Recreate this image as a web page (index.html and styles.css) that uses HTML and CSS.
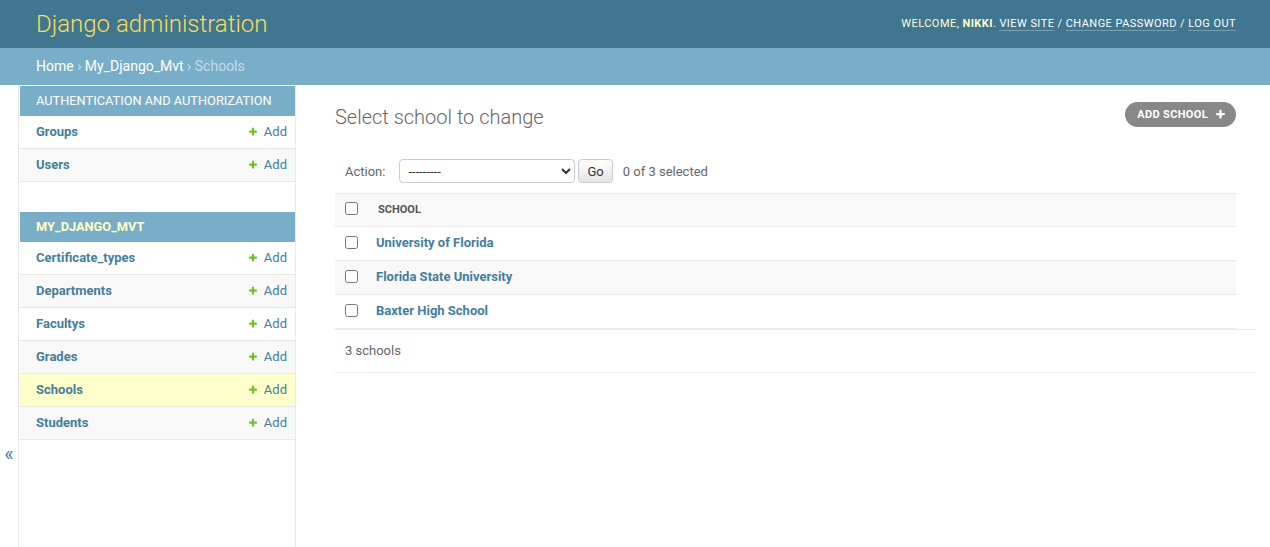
FILE: index.html
```html
<!DOCTYPE html>
<html lang="en">
<head>
<meta charset="utf-8">
<title>Select school to change | Django site admin</title>
<link rel="stylesheet" href="styles.css">
</head>
<body>
<div class="header">
  <h1 class="branding">Django administration</h1>
  <div class="user-tools">
    Welcome, <strong>nikki</strong>.
    <a href="#">View site</a> /
    <a href="#">Change password</a> /
    <a href="#">Log out</a>
  </div>
</div>
<div class="breadcrumbs">
  <a href="#">Home</a> &rsaquo; <a href="#">My_Django_Mvt</a> &rsaquo; Schools
</div>
<div class="main">
  <button class="toggle-nav" type="button" aria-label="Toggle navigation">&laquo;</button>
  <nav class="sidebar">
    <table class="module">
      <caption>Authentication and Authorization</caption>
      <tr class="row1"><th><a href="#">Groups</a></th><td><a class="addlink" href="#"><svg class="plus" viewBox="0 0 1792 1792"><path fill="#70bf2b" d="M1600 736v192q0 40-28 68t-68 28h-416v416q0 40-28 68t-68 28h-192q-40 0-68-28t-28-68v-416h-416q-40 0-68-28t-28-68v-192q0-40 28-68t68-28h416v-416q0-40 28-68t68-28h192q40 0 68 28t28 68v416h416q40 0 68 28t28 68z"/></svg>Add</a></td></tr>
      <tr class="row2"><th><a href="#">Users</a></th><td><a class="addlink" href="#"><svg class="plus" viewBox="0 0 1792 1792"><path fill="#70bf2b" d="M1600 736v192q0 40-28 68t-68 28h-416v416q0 40-28 68t-68 28h-192q-40 0-68-28t-28-68v-416h-416q-40 0-68-28t-28-68v-192q0-40 28-68t68-28h416v-416q0-40 28-68t68-28h192q40 0 68 28t28 68v416h416q40 0 68 28t28 68z"/></svg>Add</a></td></tr>
    </table>
    <table class="module">
      <caption class="current-app">My_Django_Mvt</caption>
      <tr class="row1"><th><a href="#">Certificate_types</a></th><td><a class="addlink" href="#"><svg class="plus" viewBox="0 0 1792 1792"><path fill="#70bf2b" d="M1600 736v192q0 40-28 68t-68 28h-416v416q0 40-28 68t-68 28h-192q-40 0-68-28t-28-68v-416h-416q-40 0-68-28t-28-68v-192q0-40 28-68t68-28h416v-416q0-40 28-68t68-28h192q40 0 68 28t28 68v416h416q40 0 68 28t28 68z"/></svg>Add</a></td></tr>
      <tr class="row2"><th><a href="#">Departments</a></th><td><a class="addlink" href="#"><svg class="plus" viewBox="0 0 1792 1792"><path fill="#70bf2b" d="M1600 736v192q0 40-28 68t-68 28h-416v416q0 40-28 68t-68 28h-192q-40 0-68-28t-28-68v-416h-416q-40 0-68-28t-28-68v-192q0-40 28-68t68-28h416v-416q0-40 28-68t68-28h192q40 0 68 28t28 68v416h416q40 0 68 28t28 68z"/></svg>Add</a></td></tr>
      <tr class="row1"><th><a href="#">Facultys</a></th><td><a class="addlink" href="#"><svg class="plus" viewBox="0 0 1792 1792"><path fill="#70bf2b" d="M1600 736v192q0 40-28 68t-68 28h-416v416q0 40-28 68t-68 28h-192q-40 0-68-28t-28-68v-416h-416q-40 0-68-28t-28-68v-192q0-40 28-68t68-28h416v-416q0-40 28-68t68-28h192q40 0 68 28t28 68v416h416q40 0 68 28t28 68z"/></svg>Add</a></td></tr>
      <tr class="row2"><th><a href="#">Grades</a></th><td><a class="addlink" href="#"><svg class="plus" viewBox="0 0 1792 1792"><path fill="#70bf2b" d="M1600 736v192q0 40-28 68t-68 28h-416v416q0 40-28 68t-68 28h-192q-40 0-68-28t-28-68v-416h-416q-40 0-68-28t-28-68v-192q0-40 28-68t68-28h416v-416q0-40 28-68t68-28h192q40 0 68 28t28 68v416h416q40 0 68 28t28 68z"/></svg>Add</a></td></tr>
      <tr class="current-model"><th><a href="#">Schools</a></th><td><a class="addlink" href="#"><svg class="plus" viewBox="0 0 1792 1792"><path fill="#70bf2b" d="M1600 736v192q0 40-28 68t-68 28h-416v416q0 40-28 68t-68 28h-192q-40 0-68-28t-28-68v-416h-416q-40 0-68-28t-28-68v-192q0-40 28-68t68-28h416v-416q0-40 28-68t68-28h192q40 0 68 28t28 68v416h416q40 0 68 28t28 68z"/></svg>Add</a></td></tr>
      <tr class="row2"><th><a href="#">Students</a></th><td><a class="addlink" href="#"><svg class="plus" viewBox="0 0 1792 1792"><path fill="#70bf2b" d="M1600 736v192q0 40-28 68t-68 28h-416v416q0 40-28 68t-68 28h-192q-40 0-68-28t-28-68v-416h-416q-40 0-68-28t-28-68v-192q0-40 28-68t68-28h416v-416q0-40 28-68t68-28h192q40 0 68 28t28 68v416h416q40 0 68 28t28 68z"/></svg>Add</a></td></tr>
    </table>
  </nav>
  <div class="content">
    <div class="content-head">
      <h1 class="title">Select school to change</h1>
      <a class="object-tool" href="#">Add school<svg class="tool-plus" viewBox="0 0 1792 1792"><path fill="#fff" d="M1600 736v192q0 40-28 68t-68 28h-416v416q0 40-28 68t-68 28h-192q-40 0-68-28t-28-68v-416h-416q-40 0-68-28t-28-68v-192q0-40 28-68t68-28h416v-416q0-40 28-68t68-28h192q40 0 68 28t28 68v416h416q40 0 68 28t28 68z"/></svg></a>
    </div>
    <div class="changelist">
      <div class="actions">
        <label class="action-label">Action:</label>
        <select class="action-select">
          <option>---------</option>
          <option>Delete selected schools</option>
        </select>
        <button class="go" type="button">Go</button>
        <span class="counter">0 of 3 selected</span>
      </div>
      <table class="result-list">
        <thead>
          <tr><th class="cb-col"><input type="checkbox"></th><th class="name-col"><span class="head-text">School</span></th></tr>
        </thead>
        <tbody>
          <tr class="row1"><td class="cb-col"><input type="checkbox"></td><th class="name-cell"><a href="#">University of Florida</a></th></tr>
          <tr class="row2"><td class="cb-col"><input type="checkbox"></td><th class="name-cell"><a href="#">Florida State University</a></th></tr>
          <tr class="row1"><td class="cb-col"><input type="checkbox"></td><th class="name-cell"><a href="#">Baxter High School</a></th></tr>
        </tbody>
      </table>
      <p class="paginator">3 schools</p>
    </div>
  </div>
</div>
</body>
</html>
```

FILE: styles.css
```css
html, body {
  margin: 0;
  padding: 0;
}
body {
  font-family: Roboto, "Liberation Sans", Arial, sans-serif;
  font-size: 14px;
  color: #333;
  background: #fff;
}
a {
  text-decoration: none;
  color: #447e9b;
}

/* header */
.header {
  display: flex;
  align-items: center;
  justify-content: space-between;
  height: 48px;
  padding: 0 34px 0 36px;
  background: #417690;
  box-sizing: border-box;
}
.branding {
  margin: 0 0 1px 0;
  font-size: 24px;
  font-weight: 300;
  color: #f5dd5d;
  line-height: 28px;
}
.user-tools {
  font-size: 11px;
  letter-spacing: 0.45px;
  text-transform: uppercase;
  font-weight: 400;
  color: #ffc;
  margin-bottom: 1px;
}
.user-tools strong {
  font-weight: 700;
}
.user-tools a {
  color: #fff;
  border-bottom: 1px solid rgba(255, 255, 255, 0.3);
}

/* breadcrumbs */
.breadcrumbs {
  background: #79aec8;
  padding: 10px 36px;
  line-height: 17px;
  font-size: 14px;
  color: #c4dce8;
}
.breadcrumbs a {
  color: #fff;
}

/* main */
.main {
  display: flex;
  min-height: calc(100vh - 85px);
}
.toggle-nav {
  flex: 0 0 19px;
  width: 19px;
  display: flex;
  justify-content: center;
  align-items: flex-start;
  padding: 357px 0 0 0;
  margin: 0;
  border: 0;
  border-right: 1px solid #eaeaea;
  background: #fff;
  font-family: Roboto, "Liberation Sans", sans-serif;
  font-size: 20px;
  line-height: 24px;
  color: #447e9b;
  cursor: pointer;
}
.sidebar {
  flex: 0 0 277px;
  width: 277px;
  box-sizing: border-box;
  padding-left: 1px;
  border-top: 1px solid transparent;
  border-right: 1px solid #eaeaea;
  overflow: hidden;
}
.module {
  width: 275px;
  table-layout: fixed;
  border-collapse: collapse;
  margin-bottom: 30px;
}
.module caption {
  background: #79aec8;
  color: #fff;
  text-align: left;
  text-transform: uppercase;
  white-space: nowrap;
  overflow: hidden;
  font-size: 12.8px;
  letter-spacing: 0;
  line-height: 14px;
  padding: 8px 16px;
  font-weight: 400;
}
.module caption.current-app {
  color: #ffc;
  font-weight: 700;
}
.module th, .module td {
  font-size: 13px;
  line-height: 16px;
  height: 16px;
  padding: 8px;
  border-bottom: 1px solid #e8e8e8;
  vertical-align: top;
}
.module th {
  text-align: left;
  padding-left: 16px;
  font-weight: 700;
}
.module td {
  width: 60px;
  text-align: right;
  white-space: nowrap;
}
.row1 { background: #fff; }
.row2 { background: #f8f8f8; }
.current-model { background: #ffc; }
.plus {
  display: inline-block;
  width: 10px;
  height: 10px;
  margin-right: 6px;
  vertical-align: -1px;
}

/* content */
.content {
  flex: 1 1 auto;
  min-width: 0;
  padding: 20px 34px 20px 39px;
}
.content-head {
  display: flex;
  justify-content: space-between;
  align-items: flex-start;
}
.title {
  margin: 0 0 20px 0;
  font-size: 20px;
  font-weight: 300;
  line-height: 24px;
  color: #666;
}
.object-tool {
  display: inline-flex;
  align-items: center;
  height: 25px;
  margin-top: -3px;
  padding: 0 10px 0 12px;
  border-radius: 15px;
  background: #888;
  color: #fff;
  font-size: 11px;
  font-weight: 700;
  letter-spacing: 0.35px;
  text-transform: uppercase;
}
.tool-plus {
  width: 11px;
  height: 11px;
  margin-left: 7px;
}

.actions {
  display: flex;
  align-items: center;
  padding: 10px;
  height: 24px;
  color: #666;
  font-size: 13px;
}
.action-label {
  margin-right: 14px;
}
.action-select {
  width: 176px;
  height: 24px;
  border: 1px solid #ccc;
  border-radius: 4px;
  font-family: Roboto, "Liberation Sans", sans-serif;
  font-size: 13px;
  color: #333;
  padding: 0 0 0 4px;
  margin: 0 3px 0 0;
  background: #fff;
}
.go {
  height: 24px;
  padding: 0 8px;
  border: 1px solid #ccc;
  border-radius: 4px;
  background: #fff;
  box-shadow: 0 -15px 20px -10px rgba(0, 0, 0, 0.15) inset;
  font-family: Roboto, "Liberation Sans", sans-serif;
  font-size: 13px;
  color: #333;
  margin: 0 10px 0 0;
}

.result-list {
  width: 100%;
  border-collapse: collapse;
}
.result-list thead th {
  background: #f8f8f8;
  border-top: 1px solid #eaeaea;
  border-bottom: 1px solid #eaeaea;
  height: 33px;
  padding: 8px 0 0 0;
  box-sizing: border-box;
  vertical-align: top;
  text-align: left;
}
.result-list thead th.cb-col,
.result-list tbody td.cb-col {
  width: 33px;
  padding: 8px 0 0 0;
}
.head-text {
  display: block;
  padding: 0 10px;
  line-height: 16px;
  font-size: 11px;
  font-weight: 700;
  color: #555;
  text-transform: uppercase;
}
.result-list input[type="checkbox"] {
  display: block;
  margin: 0 auto;
}
.result-list tbody input[type="checkbox"] {
  margin-top: 1px;
}
.result-list tbody td,
.result-list tbody th {
  height: 34px;
  padding: 8px;
  line-height: 16px;
  border-bottom: 1px solid #eaeaea;
  vertical-align: top;
  box-sizing: border-box;
}
.name-cell {
  text-align: left;
  font-size: 13px;
  font-weight: 700;
}
.paginator {
  width: 100%;
  margin: 0;
  padding: 10px;
  line-height: 22px;
  font-size: 13px;
  color: #666;
  border-top: 1px solid #eaeaea;
  border-bottom: 1px solid #eaeaea;
}
```
